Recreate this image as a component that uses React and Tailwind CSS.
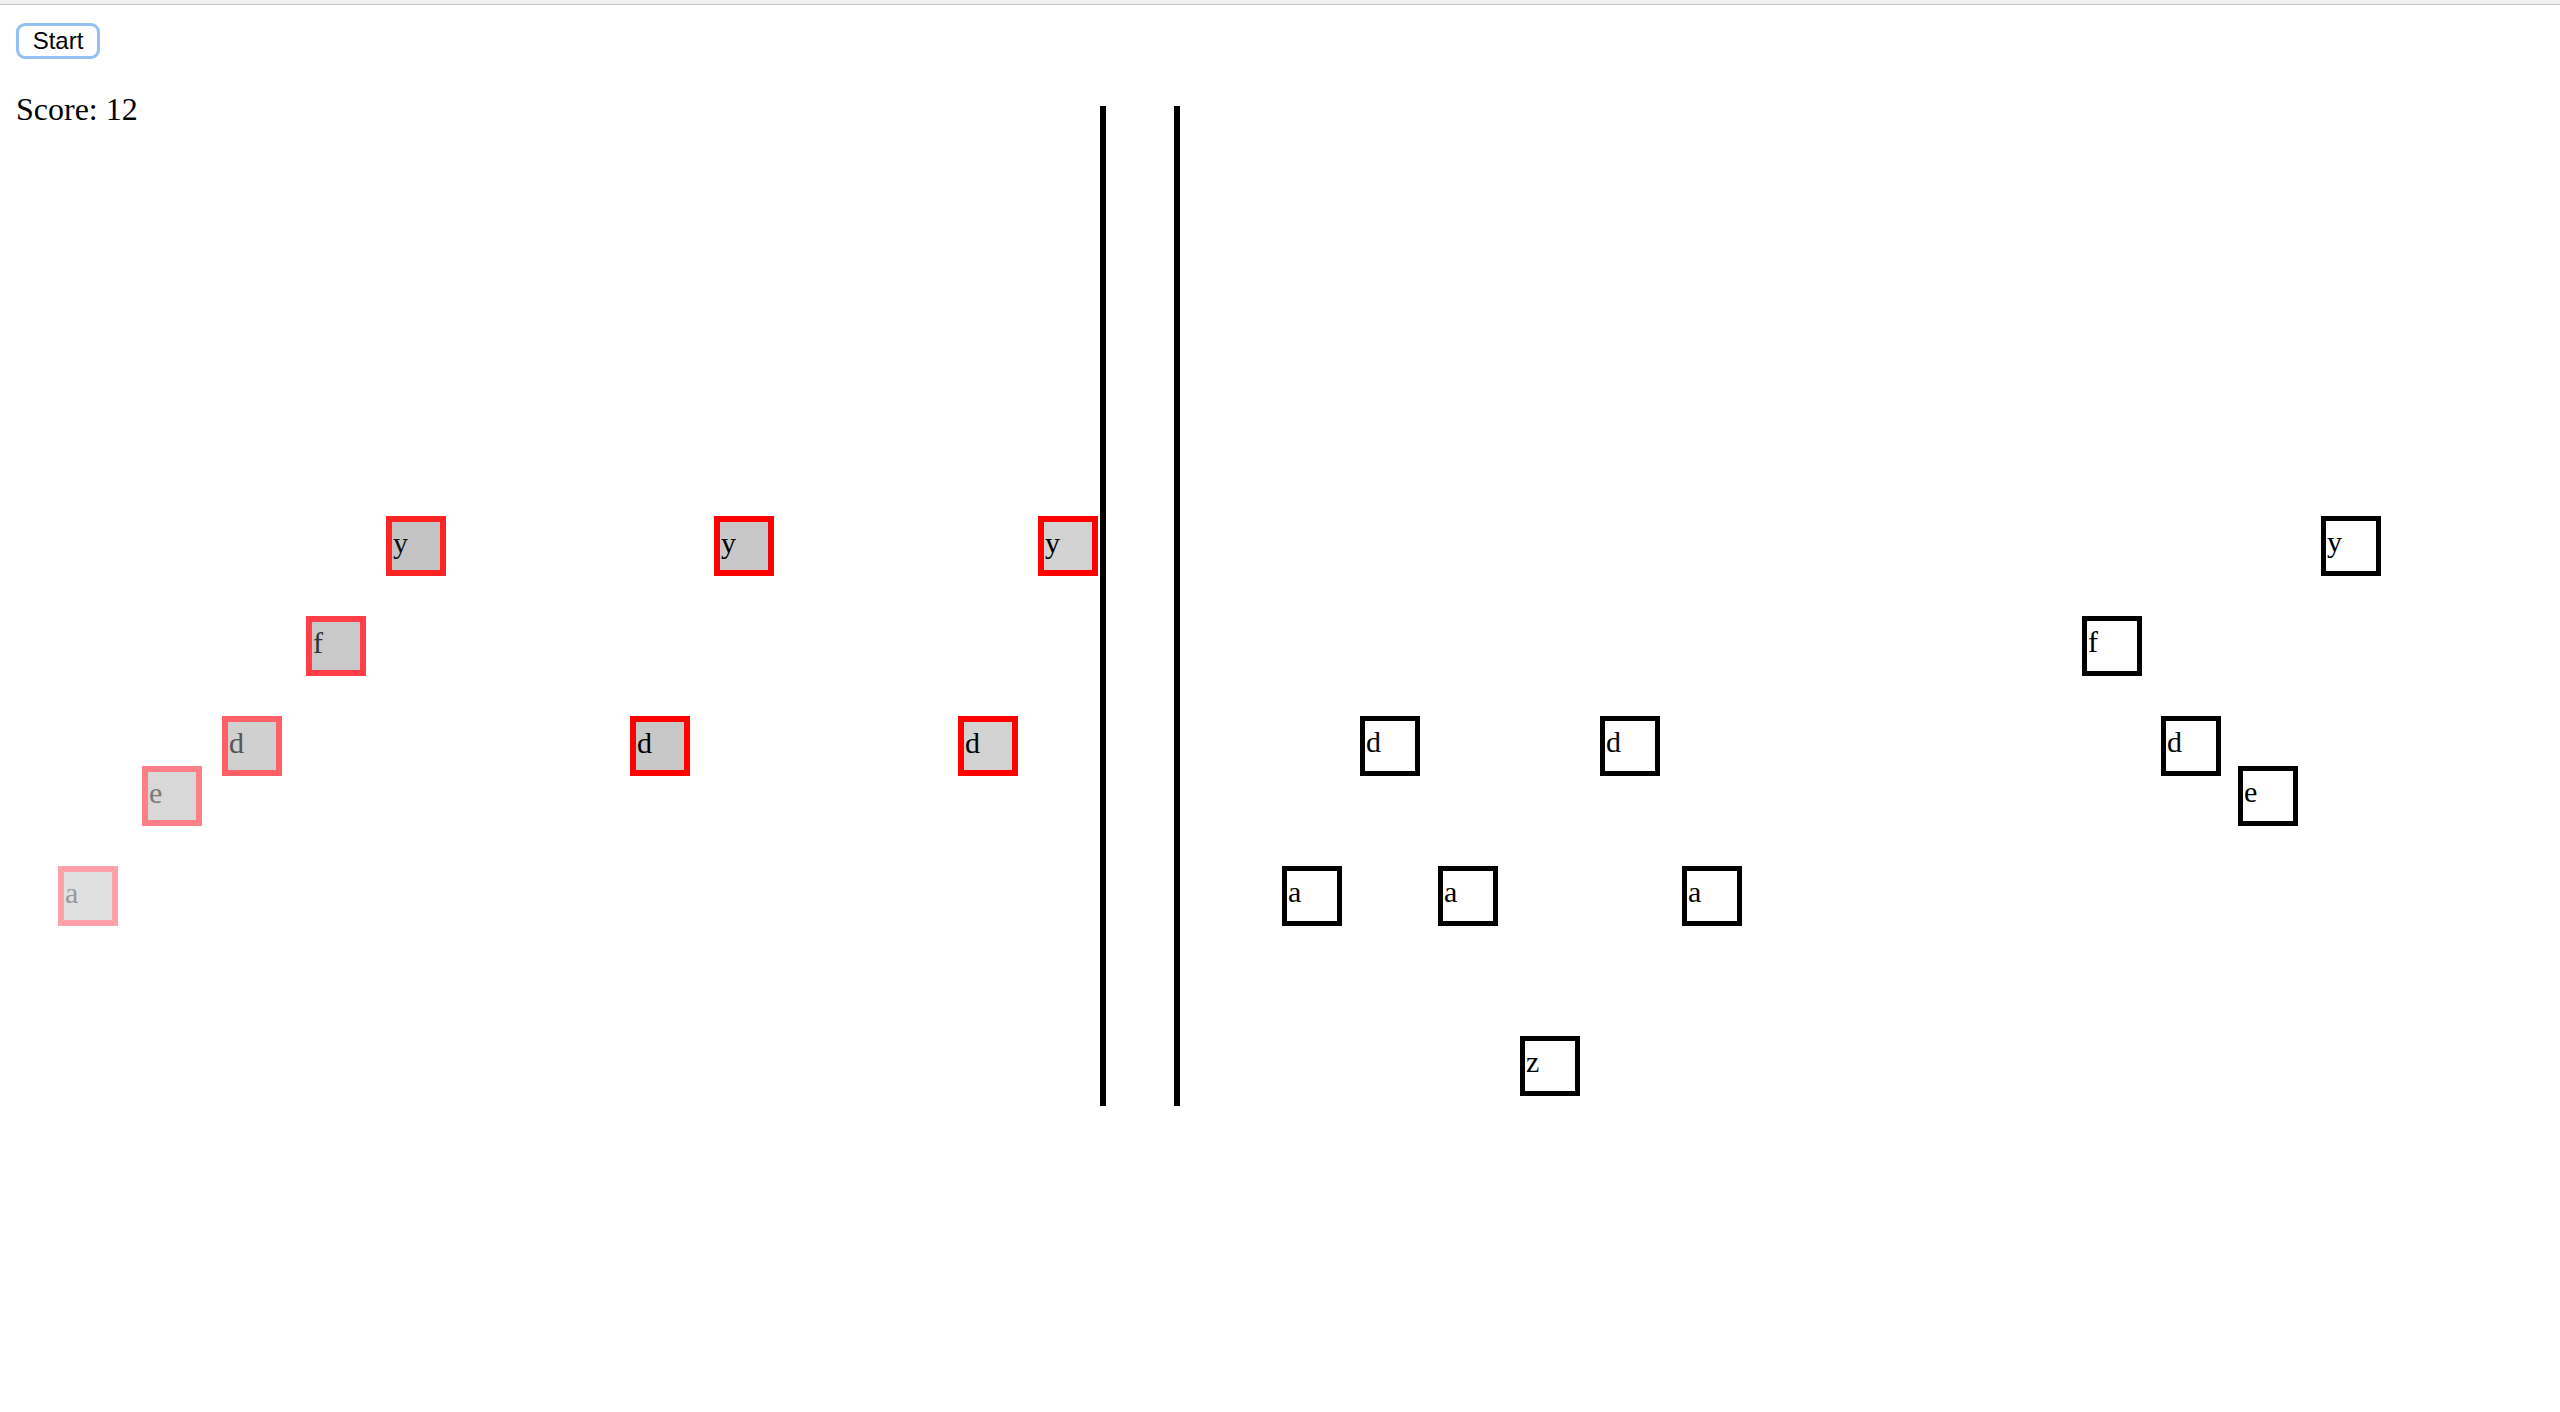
const leftTiles = [
  { ch: 'y', x: 386, y: 425, border: 'border-[#ff2424]', bg: 'bg-[#c4c4c4]', text: 'text-[#111111]' },
  { ch: 'y', x: 714, y: 425, border: 'border-[#ff0000]', bg: 'bg-[#c8c8c8]', text: 'text-black' },
  { ch: 'y', x: 1038, y: 425, border: 'border-[#ff0000]', bg: 'bg-[#d3d3d3]', text: 'text-black' },
  { ch: 'f', x: 306, y: 525, border: 'border-[#ff4048]', bg: 'bg-[#c9c9c9]', text: 'text-[#333333]' },
  { ch: 'd', x: 222, y: 625, border: 'border-[#ff6068]', bg: 'bg-[#d0d0d0]', text: 'text-[#555555]' },
  { ch: 'd', x: 630, y: 625, border: 'border-[#ff0000]', bg: 'bg-[#c8c8c8]', text: 'text-black' },
  { ch: 'd', x: 958, y: 625, border: 'border-[#ff0000]', bg: 'bg-[#d3d3d3]', text: 'text-black' },
  { ch: 'e', x: 142, y: 675, border: 'border-[#ff8088]', bg: 'bg-[#d8d8d8]', text: 'text-[#7a7a7a]' },
  { ch: 'a', x: 58, y: 775, border: 'border-[#ffa0a8]', bg: 'bg-[#e0e0e0]', text: 'text-[#999999]' },
]

const rightTiles = [
  { ch: 'y', x: 1141, y: 425 },
  { ch: 'f', x: 902, y: 525 },
  { ch: 'd', x: 180, y: 625 },
  { ch: 'd', x: 420, y: 625 },
  { ch: 'd', x: 981, y: 625 },
  { ch: 'e', x: 1058, y: 675 },
  { ch: 'a', x: 102, y: 775 },
  { ch: 'a', x: 258, y: 775 },
  { ch: 'a', x: 502, y: 775 },
  { ch: 'z', x: 340, y: 945 },
]

function Tile({ ch, x, y, className }) {
  return (
    <div
      className={`absolute w-[60px] h-[60px] pt-[4px] pl-px font-['Liberation_Serif',serif] text-[30px] leading-[33px] ${className}`}
      style={{ left: x, top: y }}
    >
      {ch}
    </div>
  )
}

export default function App() {
  return (
    <div className="min-h-screen bg-white font-['Liberation_Serif',serif] text-black">
      <div className="h-[5px] bg-[#f0f0f0] border-b border-[#c6c6c6]" />

      <div className="px-4 pt-[18px]">
        <button className="w-[84px] h-[36px] rounded-[9px] border-[3px] border-[#93bff2] bg-white font-['Liberation_Sans',sans-serif] text-[24px] leading-none text-black">
          Start
        </button>
      </div>

      <div className="mt-[32px] flex items-start">
        {/* player side */}
        <div className="relative w-[1100px] h-[1015px] shrink-0">
          <div className="pl-4 text-[32px] leading-[36px]">Score: 12</div>
          {leftTiles.map((t, i) => (
            <Tile
              key={i}
              ch={t.ch}
              x={t.x}
              y={t.y}
              className={`border-[6px] ${t.border} ${t.bg} ${t.text}`}
            />
          ))}
        </div>

        <div className="mt-[15px] w-[6px] h-[1000px] bg-black shrink-0" />
        <div className="w-[68px] shrink-0" />
        <div className="mt-[15px] w-[6px] h-[1000px] bg-black shrink-0" />

        {/* incoming side */}
        <div className="relative flex-1 h-[1015px]">
          {rightTiles.map((t, i) => (
            <Tile
              key={i}
              ch={t.ch}
              x={t.x}
              y={t.y}
              className="border-[5px] border-black bg-white text-black"
            />
          ))}
        </div>
      </div>
    </div>
  )
}
